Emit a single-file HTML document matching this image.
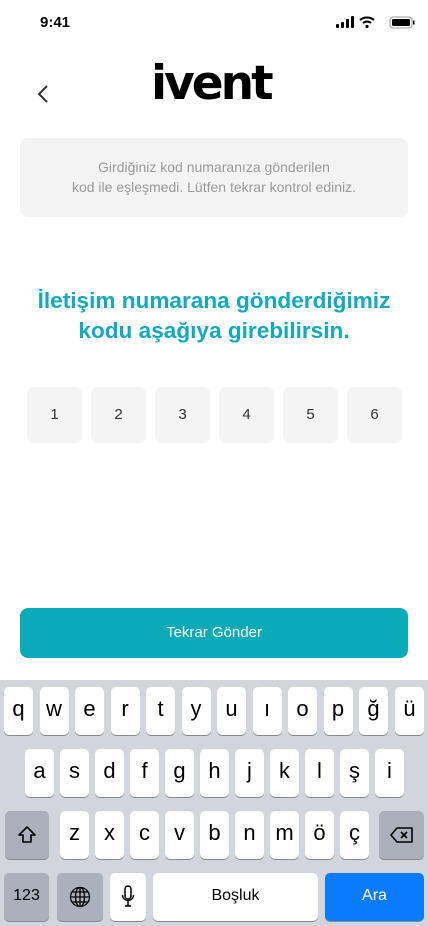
<!DOCTYPE html>
<html><head><meta charset="utf-8"><style>
*{margin:0;padding:0;box-sizing:border-box}
body{width:428px;height:926px;background:#fff;font-family:"Liberation Sans",sans-serif;position:relative;overflow:hidden}
.abs{position:absolute}
.err{left:20px;top:138px;width:388px;height:79px;background:#f3f3f3;border-radius:8px;color:#9a9a9a;font-size:14px;line-height:20px;text-align:center;padding-top:19px}
.title{left:0;top:286px;width:428px;text-align:center;color:#12abbd;font-weight:bold;font-size:22.6px;line-height:30px}
.box{top:387px;width:55px;height:56px;background:#f4f4f4;border-radius:7px;text-align:center;line-height:56px;font-size:15px;color:#333}
.btn{left:20px;top:608px;width:388px;height:50px;background:#0aaab8;border-radius:8px;color:#fff;text-align:center;line-height:50px;font-size:15px}
.kb{left:0;top:680px;width:428px;height:246px;background:#d2d5db}
.k{position:absolute;width:29px;height:48px;background:#fff;border-radius:5px;box-shadow:0 1px 0 #898a8d;text-align:center;line-height:44px;font-size:22px;color:#000}
.g{background:#abb0bb}
</style></head><body>
<div class="abs" style="left:40px;top:14px;font-weight:bold;font-size:15px">9:41</div>
<div class="abs" style="left:336px;top:16px">
<svg width="80" height="14"><rect x="0" y="8" width="3" height="4" rx="1"/><rect x="5" y="6" width="3" height="6" rx="1"/><rect x="10" y="3" width="3" height="9" rx="1"/><rect x="15" y="0" width="3" height="12" rx="1"/>
<path d="M24 4a11 11 0 0 1 14 0M27 7a6 6 0 0 1 8 0" stroke="#000" stroke-width="2" fill="none"/><circle cx="31" cy="10.5" r="1.6"/>
<rect x="54" y="1" width="22" height="11" rx="3" fill="none" stroke="#000" opacity=".4"/><rect x="56" y="3" width="18" height="7" rx="1.5"/><rect x="77" y="4.5" width="1.5" height="4"/></svg></div>
<svg class="abs" style="left:36px;top:84px" width="14" height="20"><path d="M11 2L3 10l8 8" stroke="#333" stroke-width="2" fill="none"/></svg>
<div class="abs" style="left:151px;top:56px;font-size:47px;font-weight:bold;letter-spacing:-3px;font-family:'DejaVu Sans',sans-serif;color:#000">ivent</div>
<div class="abs err">Girdiğiniz kod numaranıza gönderilen<br>kod ile eşleşmedi. Lütfen tekrar kontrol ediniz.</div>
<div class="abs title">İletişim numarana gönderdiğimiz<br>kodu aşağıya girebilirsin.</div>
<div class="abs box" style="left:27px">1</div><div class="abs box" style="left:91px">2</div><div class="abs box" style="left:155px">3</div><div class="abs box" style="left:219px">4</div><div class="abs box" style="left:283px">5</div><div class="abs box" style="left:347px">6</div>
<div class="abs btn">Tekrar Gönder</div>
<div class="abs kb">
<div class="k" style="left:4px;top:7px">q</div><div class="k" style="left:39.5px;top:7px">w</div><div class="k" style="left:75px;top:7px">e</div><div class="k" style="left:110.5px;top:7px">r</div><div class="k" style="left:146px;top:7px">t</div><div class="k" style="left:181.5px;top:7px">y</div><div class="k" style="left:217px;top:7px">u</div><div class="k" style="left:252.5px;top:7px">ı</div><div class="k" style="left:288px;top:7px">o</div><div class="k" style="left:323.5px;top:7px">p</div><div class="k" style="left:359px;top:7px">ğ</div><div class="k" style="left:395px;top:7px">ü</div>
<div class="k" style="left:25px;top:69px">a</div><div class="k" style="left:60px;top:69px">s</div><div class="k" style="left:95px;top:69px">d</div><div class="k" style="left:130px;top:69px">f</div><div class="k" style="left:165px;top:69px">g</div><div class="k" style="left:200px;top:69px">h</div><div class="k" style="left:235px;top:69px">j</div><div class="k" style="left:270px;top:69px">k</div><div class="k" style="left:305px;top:69px">l</div><div class="k" style="left:340px;top:69px">ş</div><div class="k" style="left:375px;top:69px">i</div>
<div class="k g" style="left:5px;top:131px;width:44px"><svg width="20" height="20" style="margin-top:14px"><path d="M10 2L2 10h4v7h8v-7h4z" fill="none" stroke="#000" stroke-width="1.6" stroke-linejoin="round"/></svg></div>
<div class="k" style="left:60px;top:131px">z</div><div class="k" style="left:95px;top:131px">x</div><div class="k" style="left:130px;top:131px">c</div><div class="k" style="left:165px;top:131px">v</div><div class="k" style="left:200px;top:131px">b</div><div class="k" style="left:235px;top:131px">n</div><div class="k" style="left:270px;top:131px">m</div><div class="k" style="left:305px;top:131px">ö</div><div class="k" style="left:340px;top:131px">ç</div>
<div class="k g" style="left:379px;top:131px;width:45px"><svg width="24" height="18" style="margin-top:15px"><path d="M7 2h15v14H7L1 9z" fill="none" stroke="#000" stroke-width="1.6" stroke-linejoin="round"/><path d="M11 6l6 6M17 6l-6 6" stroke="#000" stroke-width="1.6"/></svg></div>
<div class="k g" style="left:4px;top:193px;width:45px;font-size:16px;line-height:46px">123</div>
<div class="k g" style="left:57px;top:193px;width:46px"><svg width="22" height="22" style="margin-top:13px" fill="none" stroke="#000" stroke-width="1.3"><circle cx="11" cy="11" r="9.5"/><ellipse cx="11" cy="11" rx="4.5" ry="9.5"/><path d="M11 1.5v19M1.5 11h19M3 6h16M3 16h16"/></svg></div>
<div class="k" style="left:110px;top:193px;width:36px"><svg width="14" height="24" style="margin-top:12px" fill="none" stroke="#000" stroke-width="1.5"><rect x="4" y="1" width="6" height="13" rx="3"/><path d="M1.5 10a5.5 5.5 0 0 0 11 0M7 16v5M4 21h6"/></svg></div>
<div class="k" style="left:153px;top:193px;width:165px;font-size:16px;line-height:46px">Boşluk</div>
<div class="k" style="left:325px;top:193px;width:99px;background:#0a7bfd;color:#fff;font-size:16px;line-height:46px">Ara</div>
</div>
</body></html>
